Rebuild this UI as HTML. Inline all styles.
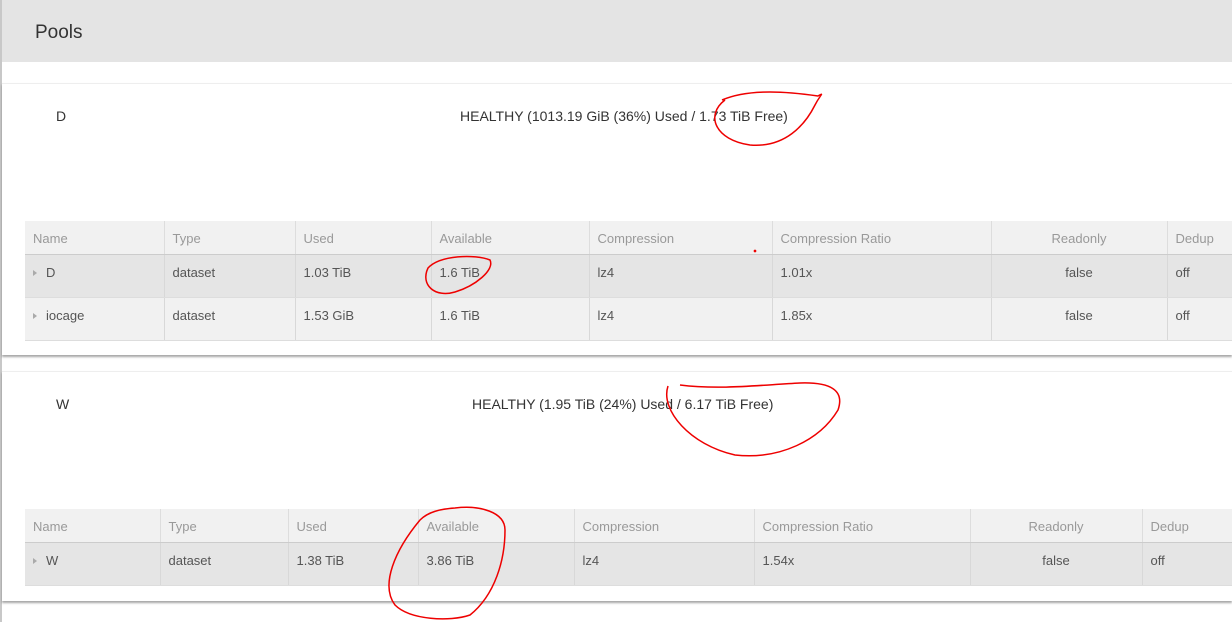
<!DOCTYPE html>
<html><head><style>
*{margin:0;padding:0;box-sizing:border-box}
body{width:1232px;height:622px;background:#fff;position:relative;overflow:hidden;font-family:"Liberation Sans",sans-serif}
.abs{position:absolute}
.hdr{left:0;top:0;width:1232px;height:62px;background:#e4e4e4;border-left:2px solid #c8c8c8}
.hdr span{position:absolute;left:33px;top:22px;font-size:19px;color:#333}
.lb{left:0;top:62px;width:2px;height:560px;background:#c8c8c8}
.card{left:2px;width:1230px;background:#fff;border-top:1px solid #eee;box-shadow:0 2px 2px rgba(0,0,0,.35)}
.t{font-size:14px;color:#333}
table{position:absolute;left:25px;border-collapse:collapse;font-size:13px;table-layout:fixed}
th{background:#f1f1f1;color:#999;font-weight:normal;text-align:left;padding-left:8px;padding-top:2px;height:33px;border-left:1px solid #ddd;border-bottom:1px solid #ccc}
td{color:#555;padding-left:8px;padding-top:10px;border-left:1px solid #d8d8d8;height:43px;vertical-align:top;border-bottom:1px solid #ddd}
th:first-child,td:first-child{border-left:none}
tr.a td{background:#e5e5e5}
tr.b td{background:#f1f1f1}
.c{text-align:center}
.tri{display:inline-block;width:0;height:0;border-left:4px solid #aaa;border-top:3.5px solid transparent;border-bottom:3.5px solid transparent;margin-right:9px;vertical-align:1px}
</style></head><body>
<div class="abs hdr"><span>Pools</span></div>
<div class="abs lb"></div>

<div class="abs card" style="top:83px;height:272px"></div>
<div class="abs t" style="left:56px;top:108px">D</div>
<div class="abs t" style="left:460px;top:108px">HEALTHY (1013.19 GiB (36%) Used / 1.73 TiB Free)</div>
<table style="top:221px;width:1207px">
<colgroup><col style="width:139px"><col style="width:131px"><col style="width:136px"><col style="width:158px"><col style="width:183px"><col style="width:219px"><col style="width:176px"><col style="width:65px"></colgroup>
<tr><th>Name</th><th>Type</th><th>Used</th><th>Available</th><th>Compression</th><th>Compression Ratio</th><th class="c" style="padding-left:0">Readonly</th><th>Dedup</th></tr>
<tr class="a"><td><span class="tri"></span>D</td><td>dataset</td><td>1.03 TiB</td><td>1.6 TiB</td><td>lz4</td><td>1.01x</td><td class="c" style="padding-left:0">false</td><td>off</td></tr>
<tr class="b"><td><span class="tri"></span>iocage</td><td>dataset</td><td>1.53 GiB</td><td>1.6 TiB</td><td>lz4</td><td>1.85x</td><td class="c" style="padding-left:0">false</td><td>off</td></tr>
</table>

<div class="abs card" style="top:371px;height:230px"></div>
<div class="abs t" style="left:56px;top:396px">W</div>
<div class="abs t" style="left:472px;top:396px">HEALTHY (1.95 TiB (24%) Used / 6.17 TiB Free)</div>
<table style="top:509px;width:1207px">
<colgroup><col style="width:135px"><col style="width:128px"><col style="width:130px"><col style="width:156px"><col style="width:180px"><col style="width:216px"><col style="width:172px"><col style="width:90px"></colgroup>
<tr><th>Name</th><th>Type</th><th>Used</th><th>Available</th><th>Compression</th><th>Compression Ratio</th><th class="c" style="padding-left:0">Readonly</th><th>Dedup</th></tr>
<tr class="a"><td><span class="tri"></span>W</td><td>dataset</td><td>1.38 TiB</td><td>3.86 TiB</td><td>lz4</td><td>1.54x</td><td class="c" style="padding-left:0">false</td><td>off</td></tr>
</table>

<svg class="abs" style="left:0;top:0" width="1232" height="622" fill="none" stroke="#e00" stroke-width="1.5">
<path d="M725 100 C705 115 715 140 750 145 C785 148 805 125 815 105 C820 95 825 92 818 96 C790 92 750 88 722 100"/>
<path d="M490 260 C475 254 440 255 428 268 C420 285 435 298 455 292 C475 286 495 270 490 260 Z"/>
<path d="M668 386 C660 410 690 445 735 455 C780 460 820 440 838 410 C845 390 830 382 800 383 C760 385 720 390 680 385"/>
<path d="M420 520 C395 550 380 585 395 605 C410 620 450 622 470 615 C495 595 505 560 505 530 C505 512 480 505 455 508 C440 509 428 512 420 520"/>
<circle cx="755" cy="251" r="0.6"/>
</svg>
</body></html>
